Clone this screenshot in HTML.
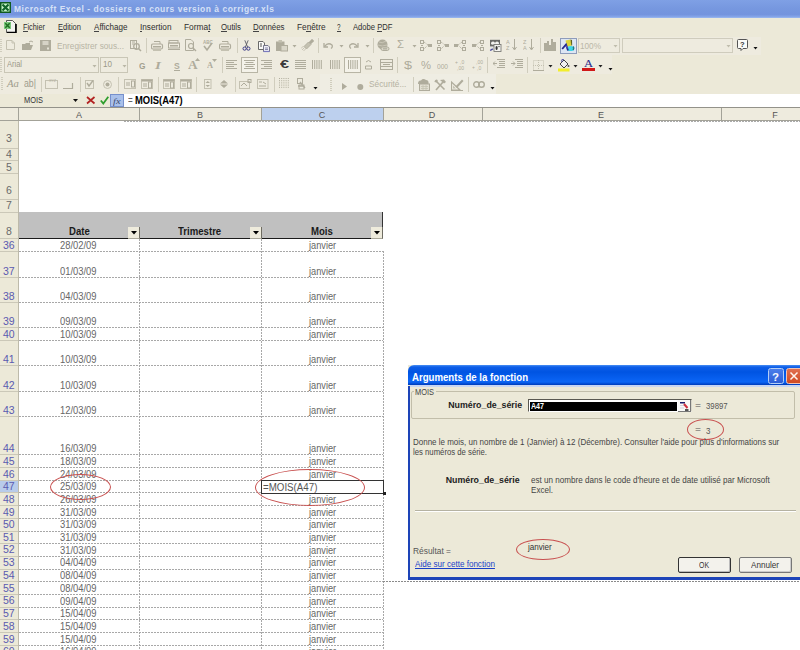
<!DOCTYPE html><html><head><meta charset="utf-8"><style>
html,body{margin:0;padding:0;width:800px;height:650px;overflow:hidden;background:#fff}
body{position:relative;font-family:"Liberation Sans",sans-serif}
.t{position:absolute;white-space:nowrap;line-height:1;transform-origin:0 0}
div,svg{position:absolute}
</style></head><body>
<div style="position:absolute;left:0px;top:0px;width:800px;height:18px;background:linear-gradient(#7FA0E5 0%,#7697DF 50%,#7494DE 80%,#88A8EA 95%,#A4BFF0 100%)"></div>
<svg style="position:absolute;left:0px;top:2px;" width="11" height="11" viewBox="0 0 11 11"><rect x="0" y="0" width="11" height="11" fill="#0F5A1E"/><rect x="1.5" y="1.5" width="8" height="8" fill="#C8F5C8"/><path d="M2.5 2.5 L8.5 8.5 M8.5 2.5 L2.5 8.5" stroke="#12652A" stroke-width="2.2"/></svg>
<div class="t" style="left:14.00px;top:4.00px;font-size:9.6px;color:#D6E1F7;font-weight:bold;transform:scaleX(0.8810);letter-spacing:0.6px;">Microsoft Excel - dossiers en cours version à corriger.xls</div>
<div style="position:absolute;left:0px;top:18px;width:800px;height:19px;background:#ECE9D8"></div>
<svg style="position:absolute;left:3px;top:20px;" width="14" height="13" viewBox="0 0 14 13"><path d="M3.5 0.5 H9.5 L12.5 3.5 V12.5 H3.5 Z" fill="#F4F4F0" stroke="#333" stroke-width="0.8"/><path d="M4 12.5 H13 V4" stroke="#000" stroke-width="1.6" fill="none"/><rect x="1" y="2" width="7" height="7" fill="#7CC87C"/><path d="M2.3 3.3 L6.7 7.7 M6.7 3.3 L2.3 7.7" stroke="#1F6E1F" stroke-width="1.5"/></svg>
<div class="t" style="left:23.00px;top:23.00px;font-size:8.5px;color:#2E2E2E;transform:scaleX(0.8627);">Fichier</div>
<div style="position:absolute;left:23.0px;top:31px;width:4.5px;height:1px;background:#444"></div>
<div class="t" style="left:58.00px;top:23.00px;font-size:8.5px;color:#2E2E2E;transform:scaleX(0.8843);">Edition</div>
<div style="position:absolute;left:58.0px;top:31px;width:5.0px;height:1px;background:#444"></div>
<div class="t" style="left:94.00px;top:23.00px;font-size:8.5px;color:#2E2E2E;transform:scaleX(0.9497);">Affichage</div>
<div style="position:absolute;left:94.0px;top:31px;width:5.4px;height:1px;background:#444"></div>
<div class="t" style="left:140.00px;top:23.00px;font-size:8.5px;color:#2E2E2E;transform:scaleX(0.9663);">Insertion</div>
<div style="position:absolute;left:140.0px;top:31px;width:2.3px;height:1px;background:#444"></div>
<div class="t" style="left:183.50px;top:23.00px;font-size:8.5px;color:#2E2E2E;transform:scaleX(0.9850);">Format</div>
<div style="position:absolute;left:207.7px;top:31px;width:2.3px;height:1px;background:#444"></div>
<div class="t" style="left:221.00px;top:23.00px;font-size:8.5px;color:#2E2E2E;transform:scaleX(0.9209);">Outils</div>
<div style="position:absolute;left:221.0px;top:31px;width:6.1px;height:1px;background:#444"></div>
<div class="t" style="left:253.00px;top:23.00px;font-size:8.5px;color:#2E2E2E;transform:scaleX(0.9253);">Données</div>
<div style="position:absolute;left:253.0px;top:31px;width:5.7px;height:1px;background:#444"></div>
<div class="t" style="left:296.50px;top:23.00px;font-size:8.5px;color:#2E2E2E;transform:scaleX(0.9733);">Fenêtre</div>
<div style="position:absolute;left:306.2px;top:31px;width:4.6px;height:1px;background:#444"></div>
<div class="t" style="left:337.00px;top:23.00px;font-size:8.5px;color:#2E2E2E;transform:scaleX(0.7419);">?</div>
<div style="position:absolute;left:337.0px;top:31px;width:3.5px;height:1px;background:#444"></div>
<div class="t" style="left:352.50px;top:23.00px;font-size:8.5px;color:#2E2E2E;transform:scaleX(0.8989);">Adobe PDF</div>
<div style="position:absolute;left:376.7px;top:31px;width:5.1px;height:1px;background:#444"></div>
<div style="position:absolute;left:0px;top:37px;width:800px;height:57px;background:#ECE9D8"></div>
<div style="position:absolute;left:0px;top:37px;width:761px;height:18px;background:#EEEBDF"></div>
<div style="position:absolute;left:0px;top:55px;width:612px;height:19px;background:#EEEBDF"></div>
<div style="position:absolute;left:0px;top:74px;width:496px;height:20px;background:#EEEBDF"></div>
<div style="position:absolute;left:0px;top:39px;width:2px;height:1px;background:#D0CDBD"></div>
<div style="position:absolute;left:0px;top:41px;width:2px;height:1px;background:#D0CDBD"></div>
<div style="position:absolute;left:0px;top:43px;width:2px;height:1px;background:#D0CDBD"></div>
<div style="position:absolute;left:0px;top:45px;width:2px;height:1px;background:#D0CDBD"></div>
<div style="position:absolute;left:0px;top:47px;width:2px;height:1px;background:#D0CDBD"></div>
<div style="position:absolute;left:0px;top:49px;width:2px;height:1px;background:#D0CDBD"></div>
<div style="position:absolute;left:0px;top:51px;width:2px;height:1px;background:#D0CDBD"></div>
<svg style="position:absolute;left:6px;top:40px;" width="10" height="11" viewBox="0 0 10 11"><path d="M0.5 0.5 H6 L8.5 3 V9.5 H0.5 Z" fill="none" stroke="#C4C1B1"/><path d="M6 0.5 V3 H8.5" fill="none" stroke="#C4C1B1"/></svg>
<svg style="position:absolute;left:22px;top:40px;" width="13" height="11" viewBox="0 0 13 11"><path d="M0 4 H3 L4 3 H8 V5 H11 L9 10 H0 Z" fill="#AFAC9C"/><path d="M7 2 Q9 0 11 2" stroke="#AFAC9C" fill="none"/></svg>
<svg style="position:absolute;left:40px;top:40px;" width="12" height="12" viewBox="0 0 12 12"><rect x="0" y="0" width="11" height="11" fill="#AFAC9C"/><rect x="2.5" y="1" width="6" height="4" fill="#D6D3C6"/><rect x="7" y="7.5" width="2" height="2" fill="#E6E3D6"/></svg>
<div class="t" style="left:56.50px;top:42.00px;font-size:8.6px;color:#B7B4A4;transform:scaleX(0.9600);">Enregistrer sous...</div>
<svg style="position:absolute;left:130px;top:40px;" width="12" height="12" viewBox="0 0 12 12"><rect x="0.5" y="0.5" width="6" height="8" fill="none" stroke="#AFAC9C"/><path d="M2 2 H5 M2 4 H5" stroke="#AFAC9C"/><circle cx="6.5" cy="6.5" r="2.8" fill="none" stroke="#AFAC9C" stroke-width="1.3"/><path d="M8.5 8.5 L11 11" stroke="#AFAC9C" stroke-width="1.5"/></svg>
<div style="position:absolute;left:145.5px;top:38px;width:1px;height:15px;background:#D0CDBD"></div>
<svg style="position:absolute;left:150.5px;top:40.5px;" width="13" height="11" viewBox="0 0 13 11"><path d="M3 0.5 H9 V3" fill="none" stroke="#AFAC9C"/><rect x="0.5" y="3" width="11" height="5" rx="1.5" fill="none" stroke="#AFAC9C" stroke-width="1.2"/><rect x="2" y="5" width="8" height="1.5" fill="#AFAC9C"/><rect x="2" y="8" width="8" height="2" fill="#C4C1B1"/></svg>
<svg style="position:absolute;left:168px;top:40px;" width="13" height="11" viewBox="0 0 13 11"><rect x="1" y="0.5" width="9" height="2.5" fill="none" stroke="#AFAC9C"/><rect x="0.5" y="3" width="11" height="5" fill="none" stroke="#AFAC9C"/><rect x="2" y="5" width="8" height="1.5" fill="#AFAC9C"/><path d="M0 9.5 H12" stroke="#AFAC9C"/></svg>
<svg style="position:absolute;left:185px;top:39px;" width="13" height="13" viewBox="0 0 13 13"><path d="M0.5 0.5 H6 L8.5 3 V11.5 H0.5 Z" fill="none" stroke="#AFAC9C"/><circle cx="6" cy="7" r="2.5" fill="none" stroke="#AFAC9C" stroke-width="1.2"/><path d="M8 9 L11 12" stroke="#AFAC9C" stroke-width="1.4"/></svg>
<svg style="position:absolute;left:202px;top:40px;" width="12" height="12" viewBox="0 0 12 12"><text x="1" y="4" font-size="4.5" font-family="Liberation Sans" font-weight="bold" fill="#AFAC9C">ABC</text><path d="M2 6 L5 10 L10 3" stroke="#AFAC9C" stroke-width="1.6" fill="none"/></svg>
<svg style="position:absolute;left:219px;top:40.5px;" width="13" height="11" viewBox="0 0 13 11"><path d="M3 0.5 H9 V3" fill="none" stroke="#AFAC9C"/><rect x="0.5" y="3" width="11" height="5" rx="1.5" fill="none" stroke="#AFAC9C" stroke-width="1.2"/><rect x="2" y="5" width="8" height="1.5" fill="#AFAC9C"/><rect x="2" y="8" width="8" height="2" fill="#C4C1B1"/></svg>
<div style="position:absolute;left:236.5px;top:38px;width:1px;height:15px;background:#D0CDBD"></div>
<svg style="position:absolute;left:242px;top:40px;" width="10" height="12" viewBox="0 0 10 12"><path d="M2.8 0.3 L5.6 7 M6.2 0.3 L3.4 7" stroke="#5A5A64" stroke-width="0.9"/><circle cx="2.6" cy="8.6" r="1.6" fill="none" stroke="#3A3A86" stroke-width="1"/><circle cx="6.4" cy="8.6" r="1.6" fill="none" stroke="#3A3A86" stroke-width="1"/></svg>
<svg style="position:absolute;left:258px;top:40.5px;" width="14" height="12" viewBox="0 0 14 12"><path d="M0.5 0.5 H5 L6.5 2 V8.5 H0.5 Z" fill="#FAFAF8" stroke="#5A5A5A" stroke-width="0.9"/><path d="M2 3 H4 M2 5 H4" stroke="#555"/><path d="M5.5 4.5 H10 L11.5 6 V10.5 H5.5 Z" fill="#EEEEF6" stroke="#6A6A80" stroke-width="0.9"/><path d="M7 7 H10 M7 8.5 H10" stroke="#8A8AAA"/><path d="M5.5 10.5 H11.5" stroke="#7A7AC0" stroke-width="1.2"/></svg>
<svg style="position:absolute;left:276px;top:40px;" width="13" height="12" viewBox="0 0 13 12"><rect x="0" y="1.5" width="8.5" height="9.5" fill="#AFAC9C"/><rect x="2.5" y="0" width="3.5" height="2.5" fill="#C4C1B1"/><rect x="5" y="5.5" width="6.5" height="5.5" fill="#D9D6C8" stroke="#AFAC9C"/></svg>
<svg style="position:absolute;left:292px;top:45px;" width="5" height="3" viewBox="0 0 5 3"><path d="M0.5 0 H4.5 L2.5 2.5 Z" fill="#AFAC9C"/></svg>
<svg style="position:absolute;left:301px;top:39px;" width="13" height="13" viewBox="0 0 13 13"><path d="M8.5 3.5 L11 1 L12 2 L9.5 4.5" stroke="#AFAC9C" stroke-width="1.6"/><path d="M3 7.5 L7.5 3 L10 5.5 L5.5 10 Z" fill="#C4C1B1" stroke="#AFAC9C" stroke-width="0.9"/><path d="M3.5 8.5 L1 11 M5 9.5 L2.5 12 M2.5 7 L0 9.5" stroke="#C4C1B1" stroke-width="0.9"/></svg>
<div style="position:absolute;left:317.5px;top:38px;width:1px;height:15px;background:#D0CDBD"></div>
<svg style="position:absolute;left:323px;top:42px;" width="11" height="7" viewBox="0 0 11 7"><path d="M1 1 V5 H5" fill="none" stroke="#AFAC9C" stroke-width="1.3"/><path d="M1.5 4.5 Q5 0 9 3 Q10 5 8 6.5" fill="none" stroke="#AFAC9C" stroke-width="1.3"/></svg>
<svg style="position:absolute;left:339px;top:45px;" width="5" height="3" viewBox="0 0 5 3"><path d="M0.5 0 H4.5 L2.5 2.5 Z" fill="#AFAC9C"/></svg>
<svg style="position:absolute;left:349px;top:42px;" width="11" height="7" viewBox="0 0 11 7"><path d="M9 1 V5 H5" fill="none" stroke="#AFAC9C" stroke-width="1.3"/><path d="M8.5 4.5 Q5 0 1 3 Q0 5 2 6.5" fill="none" stroke="#AFAC9C" stroke-width="1.3"/></svg>
<svg style="position:absolute;left:364.5px;top:45px;" width="5" height="3" viewBox="0 0 5 3"><path d="M0.5 0 H4.5 L2.5 2.5 Z" fill="#AFAC9C"/></svg>
<div style="position:absolute;left:372.5px;top:38px;width:1px;height:15px;background:#D0CDBD"></div>
<svg style="position:absolute;left:377px;top:39px;" width="14" height="13" viewBox="0 0 14 13"><circle cx="5.5" cy="5.5" r="5" fill="#AFAC9C"/><path d="M2 3 Q5 5 9 2 M1 6 Q5 8 10 6" stroke="#D0CDBE" fill="none" stroke-width="0.8"/><rect x="4" y="8" width="8" height="3.5" rx="1.7" fill="#D9D6C8" stroke="#AFAC9C"/><path d="M6 9.8 H10" stroke="#AFAC9C" stroke-width="1.2"/></svg>
<div class="t" style="left:397.00px;top:40.00px;font-size:10px;color:#AFAC9C;transform:scaleX(1.1290);">Σ</div>
<svg style="position:absolute;left:411.5px;top:45px;" width="5" height="3" viewBox="0 0 5 3"><path d="M0.5 0 H4.5 L2.5 2.5 Z" fill="#AFAC9C"/></svg>
<svg style="position:absolute;left:420px;top:40px;" width="13" height="12" viewBox="0 0 13 12"><rect x="0.5" y="0.5" width="3" height="3" fill="none" stroke="#AFAC9C"/><rect x="0.5" y="7.5" width="3" height="3" fill="none" stroke="#AFAC9C"/><path d="M1 5.5 H3" stroke="#AFAC9C"/><path d="M4 2 L8 5 L4 9" fill="none" stroke="#AFAC9C" stroke-dasharray="1 1"/><rect x="8" y="4" width="4" height="3" fill="#AFAC9C"/></svg>
<svg style="position:absolute;left:437px;top:40px;" width="13" height="12" viewBox="0 0 13 12"><rect x="0.5" y="0.5" width="3" height="3" fill="none" stroke="#AFAC9C"/><rect x="0.5" y="7.5" width="3" height="3" fill="none" stroke="#AFAC9C"/><path d="M1 5.5 H3" stroke="#AFAC9C"/><path d="M4 2 L8 5 L4 9" fill="none" stroke="#AFAC9C" stroke-dasharray="1 1"/><rect x="8" y="4" width="4" height="3" fill="#AFAC9C"/></svg>
<svg style="position:absolute;left:454px;top:40px;" width="13" height="12" viewBox="0 0 13 12"><rect x="8.5" y="0.5" width="3" height="3" fill="none" stroke="#AFAC9C"/><rect x="8.5" y="7.5" width="3" height="3" fill="none" stroke="#AFAC9C"/><path d="M9 5.5 H11" stroke="#AFAC9C"/><path d="M8 2 L4 5 L8 9" fill="none" stroke="#AFAC9C" stroke-dasharray="1 1"/><rect x="0" y="4" width="4" height="3" fill="#AFAC9C"/></svg>
<svg style="position:absolute;left:471.5px;top:40px;" width="13" height="12" viewBox="0 0 13 12"><rect x="8.5" y="0.5" width="3" height="3" fill="none" stroke="#AFAC9C"/><rect x="8.5" y="7.5" width="3" height="3" fill="none" stroke="#AFAC9C"/><path d="M9 5.5 H11" stroke="#AFAC9C"/><path d="M8 2 L4 5 L8 9" fill="none" stroke="#AFAC9C" stroke-dasharray="1 1"/><rect x="0" y="4" width="4" height="3" fill="#AFAC9C"/></svg>
<svg style="position:absolute;left:488.5px;top:39px;" width="13" height="13" viewBox="0 0 13 13"><rect x="1" y="0.8" width="10" height="7" fill="#6A6A66"/><ellipse cx="4" cy="4.2" rx="2" ry="1.6" fill="#F2F2EE"/><ellipse cx="8" cy="4.2" rx="2" ry="1.6" fill="#F2F2EE"/><rect x="1" y="7.5" width="4" height="4.5" fill="#E8E8E4"/><rect x="5" y="5.5" width="7" height="7" fill="#F4F4F0" stroke="#7A7A76" stroke-width="0.9"/><ellipse cx="7.6" cy="9" rx="1.1" ry="2" fill="#333"/><circle cx="10" cy="7.6" r="0.7" fill="#333"/><path d="M1.2 11.5 L3.8 9.8" stroke="#4A4A9A" stroke-width="1.4"/></svg>
<svg style="position:absolute;left:506px;top:39px;" width="13" height="13" viewBox="0 0 13 13"><text x="0" y="5" font-size="5.5" font-family="Liberation Sans" fill="#AFAC9C">A</text><text x="0" y="11" font-size="5.5" font-family="Liberation Sans" fill="#AFAC9C">Z</text><path d="M8.5 0 V10 M6.5 8 L8.5 11 L10.5 8" stroke="#AFAC9C" fill="none"/></svg>
<svg style="position:absolute;left:523px;top:39px;" width="13" height="13" viewBox="0 0 13 13"><text x="0" y="5" font-size="5.5" font-family="Liberation Sans" fill="#AFAC9C">Z</text><text x="0" y="11" font-size="5.5" font-family="Liberation Sans" fill="#AFAC9C">A</text><path d="M8.5 0 V10 M6.5 8 L8.5 11 L10.5 8" stroke="#AFAC9C" fill="none"/></svg>
<div style="position:absolute;left:540px;top:38px;width:1px;height:15px;background:#D0CDBD"></div>
<svg style="position:absolute;left:544px;top:39px;" width="14" height="13" viewBox="0 0 14 13"><path d="M0 12 V4 H3 V2 H5 V6 H7 V0 H9 V3 H12 V12 Z" fill="#AFAC9C"/></svg>
<div style="position:absolute;left:560px;top:37.5px;width:17px;height:16px;background:#DDE6F4;border:1px solid #8E9CBA;box-sizing:border-box"></div>
<svg style="position:absolute;left:561px;top:38px;" width="16" height="15" viewBox="0 0 16 15"><path d="M4.5 2.5 L9.5 1.5 L10.5 7.5 L6 9 Z" fill="#DCD43A"/><path d="M9.5 1.5 L11 2 L11.2 7.2 L10.3 7.6 Z" fill="#5E6420"/><ellipse cx="9.5" cy="10.5" rx="3.6" ry="2.6" fill="#3ED6E6"/><path d="M12 8.5 Q13.5 10 12 12" stroke="#207C80" stroke-width="1.3" fill="none"/><path d="M1.2 11 L5 6.5 L7 12.5" stroke="#22288A" stroke-width="1.8" fill="none"/><path d="M4 8 L6 7.5 L7 11" fill="#5A50C8"/></svg>
<div style="position:absolute;left:578px;top:38px;width:42px;height:14.5px;border:1px solid #CFCCBD;box-sizing:border-box"></div>
<div class="t" style="left:580.00px;top:42.00px;font-size:9px;color:#BAB7A7;transform:scaleX(0.9115);">100%</div>
<svg style="position:absolute;left:613px;top:45px;" width="5" height="3" viewBox="0 0 5 3"><path d="M0.5 0 H4.5 L2.5 2.5 Z" fill="#C0BDAD"/></svg>
<div style="position:absolute;left:622px;top:38px;width:111px;height:14.5px;border:1px solid #CFCCBD;box-sizing:border-box"></div>
<svg style="position:absolute;left:726px;top:45px;" width="5" height="3" viewBox="0 0 5 3"><path d="M0.5 0 H4.5 L2.5 2.5 Z" fill="#C0BDAD"/></svg>
<svg style="position:absolute;left:737px;top:39px;" width="12" height="13" viewBox="0 0 12 13"><path d="M1.5 0.5 H9.5 Q10.5 0.5 10.5 1.5 V8.5 Q10.5 9.5 9.5 9.5 H6 L4 11.5 V9.5 H1.5 Q0.5 9.5 0.5 8.5 V1.5 Q0.5 0.5 1.5 0.5 Z" fill="#FAFAF6" stroke="#555"/><text x="3" y="7.5" font-size="7.5" font-weight="bold" font-family="Liberation Sans" fill="#333">?</text></svg>
<svg style="position:absolute;left:753px;top:47px;" width="5" height="3" viewBox="0 0 5 3"><path d="M0.5 0 H4.5 L2.5 2.5 Z" fill="#111"/></svg>
<div style="position:absolute;left:0px;top:57px;width:2px;height:1px;background:#D0CDBD"></div>
<div style="position:absolute;left:0px;top:59px;width:2px;height:1px;background:#D0CDBD"></div>
<div style="position:absolute;left:0px;top:61px;width:2px;height:1px;background:#D0CDBD"></div>
<div style="position:absolute;left:0px;top:63px;width:2px;height:1px;background:#D0CDBD"></div>
<div style="position:absolute;left:0px;top:65px;width:2px;height:1px;background:#D0CDBD"></div>
<div style="position:absolute;left:0px;top:67px;width:2px;height:1px;background:#D0CDBD"></div>
<div style="position:absolute;left:0px;top:69px;width:2px;height:1px;background:#D0CDBD"></div>
<div style="position:absolute;left:0px;top:71px;width:2px;height:1px;background:#D0CDBD"></div>
<div style="position:absolute;left:4px;top:57px;width:95px;height:15.5px;border:1px solid #C9C6B6;box-sizing:border-box"></div>
<div class="t" style="left:6.50px;top:60.00px;font-size:9px;color:#9C9989;transform:scaleX(0.8333);">Arial</div>
<svg style="position:absolute;left:91.5px;top:64.5px;" width="5" height="3" viewBox="0 0 5 3"><path d="M0.5 0 H4.5 L2.5 2.5 Z" fill="#B9B6A6"/></svg>
<div style="position:absolute;left:100px;top:57px;width:28px;height:15.5px;border:1px solid #C9C6B6;box-sizing:border-box"></div>
<div class="t" style="left:102.50px;top:60.00px;font-size:9px;color:#9C9989;transform:scaleX(0.9009);">10</div>
<svg style="position:absolute;left:121.5px;top:64.5px;" width="5" height="3" viewBox="0 0 5 3"><path d="M0.5 0 H4.5 L2.5 2.5 Z" fill="#B9B6A6"/></svg>
<div class="t" style="left:139.00px;top:62.00px;font-size:9px;color:#A29F8F;font-weight:bold;transform:scaleX(0.9259);">G</div>
<div class="t" style="left:155.15px;top:62.00px;font-size:9.5px;color:#AFAC9C;font-weight:bold;transform:scaleX(1.5912);font-family:'Liberation Serif',serif;font-style:italic;">I</div>
<div class="t" style="left:173.70px;top:62.00px;font-size:9px;color:#AFAC9C;font-weight:bold;transform:scaleX(0.9524);">S</div>
<div style="position:absolute;left:173.5px;top:70px;width:6.5px;height:1px;background:#AFAC9C"></div>
<div class="t" style="left:187.60px;top:59.00px;font-size:12px;color:#AFAC9C;font-weight:bold;transform:scaleX(1.0995);font-family:'Liberation Serif',serif;">A</div>
<svg style="position:absolute;left:195px;top:58px;" width="5" height="3" viewBox="0 0 5 3"><path d="M0 3 L2.5 0 L5 3 Z" fill="#AFAC9C"/></svg>
<div class="t" style="left:207.00px;top:62.00px;font-size:8px;color:#AFAC9C;font-weight:bold;transform:scaleX(1.0417);font-family:'Liberation Serif',serif;">A</div>
<svg style="position:absolute;left:212px;top:59px;" width="5" height="3" viewBox="0 0 5 3"><path d="M0 0 H5 L2.5 3 Z" fill="#AFAC9C"/></svg>
<div style="position:absolute;left:221.5px;top:57px;width:1px;height:16px;background:#D0CDBD"></div>
<svg style="position:absolute;left:226px;top:60px;" width="12" height="10" viewBox="0 0 12 10"><rect x="0" y="0" width="11" height="1" fill="#AFAC9C"/><rect x="0" y="2" width="8" height="1" fill="#AFAC9C"/><rect x="0" y="4" width="11" height="1" fill="#AFAC9C"/><rect x="0" y="6" width="8" height="1" fill="#AFAC9C"/><rect x="0" y="8" width="11" height="1" fill="#AFAC9C"/></svg>
<div style="position:absolute;left:241px;top:57px;width:17px;height:15.5px;border:1px solid #B8B5A5;background:#F4F2E9;box-sizing:border-box"></div>
<svg style="position:absolute;left:244px;top:60px;" width="12" height="10" viewBox="0 0 12 10"><rect x="0" y="0" width="11" height="1" fill="#AFAC9C"/><rect x="1.5" y="2" width="8" height="1" fill="#AFAC9C"/><rect x="0" y="4" width="11" height="1" fill="#AFAC9C"/><rect x="1.5" y="6" width="8" height="1" fill="#AFAC9C"/><rect x="0" y="8" width="11" height="1" fill="#AFAC9C"/></svg>
<svg style="position:absolute;left:261px;top:60px;" width="12" height="10" viewBox="0 0 12 10"><rect x="0" y="0" width="11" height="1" fill="#AFAC9C"/><rect x="3" y="2" width="8" height="1" fill="#AFAC9C"/><rect x="0" y="4" width="11" height="1" fill="#AFAC9C"/><rect x="3" y="6" width="8" height="1" fill="#AFAC9C"/><rect x="0" y="8" width="11" height="1" fill="#AFAC9C"/></svg>
<div class="t" style="left:279.50px;top:60.00px;font-size:10px;color:#3A3A3A;font-weight:bold;transform:scaleX(1.6216);">€</div>
<svg style="position:absolute;left:295px;top:60px;" width="12" height="10" viewBox="0 0 12 10"><rect x="0" y="0" width="11" height="1" fill="#AFAC9C"/><rect x="0" y="2" width="11" height="1" fill="#AFAC9C"/><rect x="0" y="4" width="11" height="1" fill="#AFAC9C"/><rect x="0" y="6" width="11" height="1" fill="#AFAC9C"/><rect x="0" y="8" width="11" height="1" fill="#AFAC9C"/></svg>
<svg style="position:absolute;left:312px;top:60px;" width="12" height="10" viewBox="0 0 12 10"><rect x="0.0" y="0" width="1" height="9" fill="#AFAC9C"/><rect x="2.2" y="0" width="1" height="9" fill="#AFAC9C"/><rect x="4.4" y="0" width="1" height="9" fill="#AFAC9C"/><rect x="6.6" y="0" width="1" height="9" fill="#AFAC9C"/><rect x="8.8" y="0" width="1" height="9" fill="#AFAC9C"/></svg>
<svg style="position:absolute;left:330px;top:60px;" width="12" height="10" viewBox="0 0 12 10"><rect x="0.0" y="0" width="1" height="9" fill="#AFAC9C"/><rect x="2.2" y="0" width="1" height="9" fill="#AFAC9C"/><rect x="4.4" y="0" width="1" height="9" fill="#AFAC9C"/><rect x="6.6" y="0" width="1" height="9" fill="#AFAC9C"/><rect x="8.8" y="0" width="1" height="9" fill="#AFAC9C"/></svg>
<div style="position:absolute;left:344px;top:57px;width:17px;height:15.5px;border:1px solid #B8B5A5;background:#F4F2E9;box-sizing:border-box"></div>
<svg style="position:absolute;left:347.5px;top:60px;" width="12" height="10" viewBox="0 0 12 10"><rect x="0.0" y="0" width="1" height="9" fill="#AFAC9C"/><rect x="2.2" y="0" width="1" height="9" fill="#AFAC9C"/><rect x="4.4" y="0" width="1" height="9" fill="#AFAC9C"/><rect x="6.6" y="0" width="1" height="9" fill="#AFAC9C"/><rect x="8.8" y="0" width="1" height="9" fill="#AFAC9C"/></svg>
<svg style="position:absolute;left:365px;top:59px;" width="8" height="11" viewBox="0 0 8 11"><path d="M1 3 Q3.5 0 6 3 M0.5 7 H6.5 V10 H0.5 Z" fill="none" stroke="#AFAC9C"/></svg>
<svg style="position:absolute;left:380px;top:59px;" width="14" height="12" viewBox="0 0 14 12"><rect x="0.5" y="0.5" width="12" height="10" fill="none" stroke="#AFAC9C"/><path d="M0 3.5 H13 M0 7.5 H13 M3 5.5 H10" stroke="#AFAC9C"/></svg>
<div style="position:absolute;left:397px;top:57px;width:1px;height:16px;background:#D0CDBD"></div>
<div class="t" style="left:404.00px;top:61.00px;font-size:10px;color:#AFAC9C;transform:scaleX(1.4414);">$</div>
<div class="t" style="left:421.00px;top:61.00px;font-size:10px;color:#AFAC9C;transform:scaleX(1.1236);">%</div>
<div class="t" style="left:437.00px;top:63.00px;font-size:8px;color:#AFAC9C;transform:scaleX(0.8234);">000</div>
<svg style="position:absolute;left:454.5px;top:59px;" width="12" height="12" viewBox="0 0 12 12"><text x="0" y="4.5" font-size="5" font-family="Liberation Sans" fill="#AFAC9C">+</text><text x="5" y="5" font-size="5" font-family="Liberation Sans" fill="#AFAC9C">,0</text><text x="2" y="10.5" font-size="5" font-family="Liberation Sans" fill="#AFAC9C">,00</text></svg>
<svg style="position:absolute;left:471.5px;top:59px;" width="12" height="12" viewBox="0 0 12 12"><text x="4" y="5" font-size="5" font-family="Liberation Sans" fill="#AFAC9C">,00</text><text x="0" y="10" font-size="5" font-family="Liberation Sans" fill="#AFAC9C">+</text><text x="5" y="10.5" font-size="5" font-family="Liberation Sans" fill="#AFAC9C">,0</text></svg>
<div style="position:absolute;left:487px;top:57px;width:1px;height:16px;background:#D0CDBD"></div>
<svg style="position:absolute;left:493px;top:59px;" width="13" height="12" viewBox="0 0 13 12"><path d="M4 0.5 H12 M6 2.5 H12 M6 4.5 H12 M6 6.5 H12 M4 8.5 H12 M0 4.5 H4 M2 2.5 L0 4.5 L2 6.5" stroke="#AFAC9C" fill="none"/></svg>
<svg style="position:absolute;left:510.5px;top:59px;" width="12" height="12" viewBox="0 0 12 12"><path d="M4 0.5 H12 M6 2.5 H12 M6 4.5 H12 M6 6.5 H12 M4 8.5 H12 M0 4.5 H4 M2 2.5 L4 4.5 L2 6.5" stroke="#AFAC9C" fill="none"/></svg>
<div style="position:absolute;left:526.5px;top:57px;width:1px;height:16px;background:#D0CDBD"></div>
<svg style="position:absolute;left:532.5px;top:59.5px;" width="12" height="12" viewBox="0 0 12 12"><path d="M0.5 0.5 H10.5 V10.5 H0.5 Z M5.5 0 V11 M0 5.5 H11" stroke="#C4C1B1" fill="none" stroke-dasharray="1 1"/><path d="M0 10.5 H11" stroke="#AFAC9C"/></svg>
<svg style="position:absolute;left:548px;top:64.5px;" width="5" height="3" viewBox="0 0 5 3"><path d="M0.5 0 H4.5 L2.5 2.5 Z" fill="#222"/></svg>
<svg style="position:absolute;left:557.5px;top:58.5px;" width="12" height="14" viewBox="0 0 12 14"><path d="M2 5 L6 1 L10 5 L6 9 Z" fill="#F0F0F0" stroke="#444"/><path d="M6 1 Q3 -1 4 3" stroke="#3C3CA0" fill="none"/><circle cx="10.5" cy="7" r="1" fill="#555"/><rect x="0" y="9.5" width="11.5" height="3" fill="#F2EE2C"/></svg>
<svg style="position:absolute;left:573px;top:64.5px;" width="5" height="3" viewBox="0 0 5 3"><path d="M0.5 0 H4.5 L2.5 2.5 Z" fill="#222"/></svg>
<div class="t" style="left:583.50px;top:60.00px;font-size:9.5px;color:#2A2A8A;transform:scaleX(1.3158);font-family:'Liberation Serif',serif;">A</div>
<div style="position:absolute;left:582px;top:67.8px;width:12.5px;height:3px;background:#D01818"></div>
<svg style="position:absolute;left:598px;top:64.5px;" width="5" height="3" viewBox="0 0 5 3"><path d="M0.5 0 H4.5 L2.5 2.5 Z" fill="#222"/></svg>
<svg style="position:absolute;left:607.5px;top:67.5px;" width="5" height="3" viewBox="0 0 5 3"><path d="M0.5 0 H4.5 L2.5 2.5 Z" fill="#111"/></svg>
<div style="position:absolute;left:1px;top:77px;width:2px;height:1px;background:#D0CDBD"></div>
<div style="position:absolute;left:1px;top:79px;width:2px;height:1px;background:#D0CDBD"></div>
<div style="position:absolute;left:1px;top:81px;width:2px;height:1px;background:#D0CDBD"></div>
<div style="position:absolute;left:1px;top:83px;width:2px;height:1px;background:#D0CDBD"></div>
<div style="position:absolute;left:1px;top:85px;width:2px;height:1px;background:#D0CDBD"></div>
<div style="position:absolute;left:1px;top:87px;width:2px;height:1px;background:#D0CDBD"></div>
<div style="position:absolute;left:1px;top:89px;width:2px;height:1px;background:#D0CDBD"></div>
<div class="t" style="left:7.09px;top:79.00px;font-size:10px;color:#A09D8D;transform:scaleX(1.0730);font-family:'Liberation Serif',serif;font-style:italic;">Aa</div>
<div class="t" style="left:24.00px;top:79.00px;font-size:10px;color:#A09D8D;transform:scaleX(0.8759);">ab|</div>
<div style="position:absolute;left:40.5px;top:77px;width:1px;height:15px;background:#D0CDBD"></div>
<svg style="position:absolute;left:45px;top:78px;" width="14" height="12" viewBox="0 0 14 12"><rect x="0.5" y="2.5" width="12" height="8" fill="none" stroke="#C4C1B1"/><text x="4" y="3.5" font-size="3.5" font-family="Liberation Sans" fill="#AFAC9C">XYZ</text></svg>
<svg style="position:absolute;left:63px;top:83px;" width="11" height="7" viewBox="0 0 11 7"><path d="M0 5.5 H9.5 V0" stroke="#AFAC9C" fill="none" stroke-width="1.2"/></svg>
<div style="position:absolute;left:79.5px;top:77px;width:1px;height:15px;background:#D0CDBD"></div>
<svg style="position:absolute;left:85px;top:80px;" width="10" height="10" viewBox="0 0 10 10"><rect x="0.5" y="0.5" width="8" height="8" fill="none" stroke="#C4C1B1"/><path d="M2 3 L4 6 L8 0.5" stroke="#AFAC9C" fill="none" stroke-width="1.4"/></svg>
<svg style="position:absolute;left:103px;top:80px;" width="10" height="10" viewBox="0 0 10 10"><circle cx="4.5" cy="4.5" r="4" fill="none" stroke="#C4C1B1"/><circle cx="4.5" cy="4.5" r="2" fill="#AFAC9C"/></svg>
<div style="position:absolute;left:118px;top:77px;width:1px;height:15px;background:#D0CDBD"></div>
<svg style="position:absolute;left:123.5px;top:79px;" width="13" height="11" viewBox="0 0 13 11"><rect x="0.5" y="0.5" width="11" height="9" fill="none" stroke="#C4C1B1"/><path d="M2 4 H6 M2 6 H6" stroke="#AFAC9C"/><rect x="7.5" y="2" width="3" height="6" fill="none" stroke="#AFAC9C"/></svg>
<svg style="position:absolute;left:140.5px;top:79px;" width="13" height="11" viewBox="0 0 13 11"><rect x="0.5" y="0.5" width="11" height="9" fill="none" stroke="#C4C1B1"/><rect x="0.5" y="0.5" width="11" height="2" fill="#AFAC9C"/><path d="M2 5 H6 M2 7 H6" stroke="#AFAC9C"/><rect x="7.5" y="3" width="3" height="6" fill="none" stroke="#AFAC9C"/></svg>
<div style="position:absolute;left:157.5px;top:77px;width:1px;height:15px;background:#D0CDBD"></div>
<svg style="position:absolute;left:162.5px;top:79px;" width="13" height="11" viewBox="0 0 13 11"><rect x="0.5" y="0.5" width="11" height="9" fill="none" stroke="#C4C1B1"/><rect x="0.5" y="0.5" width="11" height="2" fill="#AFAC9C"/><path d="M2 5 H6 M2 7 H6" stroke="#AFAC9C"/><rect x="7.5" y="3" width="3" height="6" fill="none" stroke="#AFAC9C"/></svg>
<svg style="position:absolute;left:179.5px;top:79px;" width="13" height="11" viewBox="0 0 13 11"><rect x="0.5" y="0.5" width="11" height="9" fill="none" stroke="#C4C1B1"/><rect x="0.5" y="0.5" width="11" height="2" fill="#AFAC9C"/><path d="M2 5 H6 M2 7 H6" stroke="#AFAC9C"/><rect x="7.5" y="3" width="3" height="6" fill="none" stroke="#AFAC9C"/></svg>
<div style="position:absolute;left:195.7px;top:77px;width:1px;height:15px;background:#D0CDBD"></div>
<svg style="position:absolute;left:203.5px;top:79px;" width="8" height="11" viewBox="0 0 8 11"><rect x="0.5" y="0.5" width="6.5" height="9" fill="none" stroke="#C4C1B1"/><path d="M1.5 4 L3.75 2 L6 4 Z M1.5 6 L3.75 8 L6 6 Z" fill="#AFAC9C"/></svg>
<svg style="position:absolute;left:220px;top:80px;" width="9" height="9" viewBox="0 0 9 9"><path d="M0 3.5 L4 0 L8 3.5 Z M0 4.5 L4 8 L8 4.5 Z" fill="#AFAC9C"/></svg>
<div style="position:absolute;left:234.7px;top:77px;width:1px;height:15px;background:#D0CDBD"></div>
<svg style="position:absolute;left:238.5px;top:79px;" width="14" height="11" viewBox="0 0 14 11"><rect x="0.5" y="2.5" width="10" height="7" fill="none" stroke="#C4C1B1"/><path d="M2 7 L5 4 L8 7" stroke="#AFAC9C" fill="none"/><rect x="9" y="0.5" width="3" height="3" fill="none" stroke="#AFAC9C"/></svg>
<svg style="position:absolute;left:256.5px;top:79px;" width="12" height="11" viewBox="0 0 12 11"><rect x="0.5" y="0.5" width="10.5" height="9" fill="none" stroke="#C4C1B1"/><path d="M2 3 H5 M2 7 H9 M6 3 L9 5" stroke="#AFAC9C"/></svg>
<div style="position:absolute;left:274px;top:77px;width:1px;height:15px;background:#D0CDBD"></div>
<svg style="position:absolute;left:279px;top:78px;" width="12" height="12" viewBox="0 0 12 12"><rect x="0.0" y="0.0" width="1" height="1" fill="#AFAC9C"/><rect x="0.0" y="2.2" width="1" height="1" fill="#AFAC9C"/><rect x="0.0" y="4.4" width="1" height="1" fill="#AFAC9C"/><rect x="0.0" y="6.6" width="1" height="1" fill="#AFAC9C"/><rect x="0.0" y="8.8" width="1" height="1" fill="#AFAC9C"/><rect x="2.2" y="0.0" width="1" height="1" fill="#AFAC9C"/><rect x="2.2" y="2.2" width="1" height="1" fill="#AFAC9C"/><rect x="2.2" y="4.4" width="1" height="1" fill="#AFAC9C"/><rect x="2.2" y="6.6" width="1" height="1" fill="#AFAC9C"/><rect x="2.2" y="8.8" width="1" height="1" fill="#AFAC9C"/><rect x="4.4" y="0.0" width="1" height="1" fill="#AFAC9C"/><rect x="4.4" y="2.2" width="1" height="1" fill="#AFAC9C"/><rect x="4.4" y="4.4" width="1" height="1" fill="#AFAC9C"/><rect x="4.4" y="6.6" width="1" height="1" fill="#AFAC9C"/><rect x="4.4" y="8.8" width="1" height="1" fill="#AFAC9C"/><rect x="6.6" y="0.0" width="1" height="1" fill="#AFAC9C"/><rect x="6.6" y="2.2" width="1" height="1" fill="#AFAC9C"/><rect x="6.6" y="4.4" width="1" height="1" fill="#AFAC9C"/><rect x="6.6" y="6.6" width="1" height="1" fill="#AFAC9C"/><rect x="6.6" y="8.8" width="1" height="1" fill="#AFAC9C"/><rect x="8.8" y="0.0" width="1" height="1" fill="#AFAC9C"/><rect x="8.8" y="2.2" width="1" height="1" fill="#AFAC9C"/><rect x="8.8" y="4.4" width="1" height="1" fill="#AFAC9C"/><rect x="8.8" y="6.6" width="1" height="1" fill="#AFAC9C"/><rect x="8.8" y="8.8" width="1" height="1" fill="#AFAC9C"/></svg>
<svg style="position:absolute;left:297px;top:78px;" width="10" height="13" viewBox="0 0 10 13"><rect x="0.5" y="0.5" width="5" height="5" fill="none" stroke="#AFAC9C"/><path d="M3 4 L8 10 M1 8 H6" stroke="#AFAC9C" stroke-width="1.3"/><rect x="2" y="7" width="5" height="4" fill="none" stroke="#AFAC9C"/></svg>
<svg style="position:absolute;left:312.5px;top:87.3px;" width="5" height="3" viewBox="0 0 5 3"><path d="M0.5 0 H4.5 L2.5 2.5 Z" fill="#111"/></svg>
<div style="position:absolute;left:320px;top:74px;width:176px;height:20px;background:#EFEDE3"></div>
<div style="position:absolute;left:329.5px;top:78px;width:2px;height:1px;background:#D0CDBD"></div>
<div style="position:absolute;left:329.5px;top:80px;width:2px;height:1px;background:#D0CDBD"></div>
<div style="position:absolute;left:329.5px;top:82px;width:2px;height:1px;background:#D0CDBD"></div>
<div style="position:absolute;left:329.5px;top:84px;width:2px;height:1px;background:#D0CDBD"></div>
<div style="position:absolute;left:329.5px;top:86px;width:2px;height:1px;background:#D0CDBD"></div>
<div style="position:absolute;left:329.5px;top:88px;width:2px;height:1px;background:#D0CDBD"></div>
<div style="position:absolute;left:329.5px;top:90px;width:2px;height:1px;background:#D0CDBD"></div>
<svg style="position:absolute;left:341.5px;top:83px;" width="6" height="7" viewBox="0 0 6 7"><path d="M0 0 L5 3.5 L0 7 Z" fill="#AFAC9C"/></svg>
<svg style="position:absolute;left:357px;top:84px;" width="7" height="6" viewBox="0 0 7 6"><circle cx="3.3" cy="3" r="3" fill="#AFAC9C"/></svg>
<div class="t" style="left:368.60px;top:80.00px;font-size:8.6px;color:#B5B2A2;transform:scaleX(0.9638);">Sécurité...</div>
<div style="position:absolute;left:412.7px;top:77px;width:1px;height:15px;background:#D0CDBD"></div>
<svg style="position:absolute;left:417px;top:77.5px;" width="14" height="14" viewBox="0 0 14 14"><path d="M1 6 Q1 2 4 2.5 Q6 0 9 2 Q12 2 11.5 6 Z" fill="#AFAC9C"/><rect x="2.5" y="6" width="10" height="6.5" fill="#E2DFD2" stroke="#AFAC9C"/><path d="M4 8.5 H11 M4 10.5 H11 M6 7 V12 M9 7 V12" stroke="#C4C1B1" stroke-width="0.8"/></svg>
<svg style="position:absolute;left:434px;top:78.5px;" width="14" height="12" viewBox="0 0 14 12"><path d="M2 11 L9 3" stroke="#AFAC9C" stroke-width="1.6"/><path d="M6 1 L10 0.5 L12 3 L10 4.5 Z" fill="#AFAC9C"/><path d="M2.5 2.5 L10.5 10.5" stroke="#AFAC9C" stroke-width="1.6"/><path d="M0.5 3 Q0.5 0.5 3 0.5 L4 2 L2.5 3.5 Z" fill="#AFAC9C"/></svg>
<svg style="position:absolute;left:451px;top:77.5px;" width="14" height="14" viewBox="0 0 14 14"><path d="M0.5 12 V4 L9 12 Z" fill="none" stroke="#AFAC9C" stroke-width="1.2"/><path d="M2 10.5 V7.5 L5 10.5 Z" fill="#C4C1B1"/><path d="M4.5 8.5 L11 1.5 L12.5 3 L6 10 Z" fill="#AFAC9C"/><path d="M0 12.5 H12" stroke="#AFAC9C"/></svg>
<div style="position:absolute;left:468.4px;top:77px;width:1px;height:15px;background:#D0CDBD"></div>
<svg style="position:absolute;left:473px;top:80.5px;" width="14" height="8" viewBox="0 0 14 8"><circle cx="3.5" cy="3.5" r="2.8" fill="none" stroke="#AFAC9C" stroke-width="1.4"/><circle cx="8.5" cy="3.5" r="2.8" fill="none" stroke="#AFAC9C" stroke-width="1.4"/></svg>
<svg style="position:absolute;left:490px;top:87.3px;" width="5" height="3" viewBox="0 0 5 3"><path d="M0.5 0 H4.5 L2.5 2.5 Z" fill="#111"/></svg>
<div style="position:absolute;left:0px;top:94px;width:800px;height:13px;background:#ECE9D8"></div>
<div style="position:absolute;left:124px;top:94px;width:676px;height:13px;background:#fff"></div>
<div class="t" style="left:24.00px;top:96.00px;font-size:8.5px;color:#333;transform:scaleX(0.8749);">MOIS</div>
<svg style="position:absolute;left:72.5px;top:99px;" width="5" height="3" viewBox="0 0 5 3"><path d="M0 0 H5 L2.5 3 Z" fill="#111"/></svg>
<svg style="position:absolute;left:86px;top:96px;" width="9.5" height="8.5" viewBox="0 0 9.5 8.5"><path d="M1 1 L8.5 7.5 M8.5 1 L1 7.5" stroke="#B22222" stroke-width="1.7"/></svg>
<svg style="position:absolute;left:100px;top:96px;" width="9" height="8.5" viewBox="0 0 9 8.5"><path d="M0.8 4.5 L3.3 7.5 L8.3 0.8" stroke="#2E9E2E" stroke-width="1.8" fill="none"/></svg>
<div style="position:absolute;left:110px;top:94px;width:14px;height:13px;background:#A9C0EA;border:1px solid #7690CC;box-sizing:border-box"></div>
<div class="t" style="left:113.00px;top:97.00px;font-size:8.5px;color:#3A4A70;transform:scaleX(1.2255);font-family:'Liberation Serif',serif;font-style:italic;">fx</div>
<div class="t" style="left:128.30px;top:96.00px;font-size:10px;color:#666;transform:scaleX(0.8034);">=</div>
<div class="t" style="left:134.90px;top:96.00px;font-size:10px;color:#000;font-weight:bold;transform:scaleX(0.9416);">MOIS(A47)</div>
<div style="position:absolute;left:0px;top:107px;width:800px;height:14px;background:#EEEBDE;border-top:1px solid #93928A"></div>
<div style="position:absolute;left:262px;top:108px;width:121px;height:12px;background:#BDD0EE"></div>
<div style="position:absolute;left:18px;top:108px;width:1px;height:12px;background:#A3A298"></div>
<div style="position:absolute;left:139px;top:108px;width:1px;height:12px;background:#A3A298"></div>
<div style="position:absolute;left:261px;top:108px;width:1px;height:12px;background:#A3A298"></div>
<div style="position:absolute;left:383px;top:108px;width:1px;height:12px;background:#A3A298"></div>
<div style="position:absolute;left:482px;top:108px;width:1px;height:12px;background:#A3A298"></div>
<div style="position:absolute;left:721px;top:108px;width:1px;height:12px;background:#A3A298"></div>
<div style="position:absolute;left:0px;top:120px;width:800px;height:1px;background:#A3A298"></div>
<div class="t" style="left:76.00px;top:111.00px;font-size:9px;color:#555;">A</div>
<div class="t" style="left:197.00px;top:111.00px;font-size:9px;color:#555;">B</div>
<div class="t" style="left:318.75px;top:111.00px;font-size:9px;color:#555;">C</div>
<div class="t" style="left:428.75px;top:111.00px;font-size:9px;color:#555;">D</div>
<div class="t" style="left:598.00px;top:111.00px;font-size:9px;color:#555;">E</div>
<div class="t" style="left:772.25px;top:111.00px;font-size:9px;color:#555;">F</div>
<div style="position:absolute;left:19px;top:121px;width:781px;height:529px;background:#fff"></div>
<div style="position:absolute;left:0px;top:121px;width:18px;height:529px;background:#ECE9D8"></div>
<div style="position:absolute;left:18px;top:121px;width:1px;height:529px;background:#BDBAAA"></div>
<div style="position:absolute;left:19px;top:212px;width:364px;height:26px;background:#C0C0C0"></div>
<div style="position:absolute;left:19px;top:238px;width:364px;height:1.3px;background:#1A1A1A"></div>
<div style="position:absolute;left:382px;top:212px;width:1.2px;height:15px;background:#333"></div>
<div class="t" style="left:68.60px;top:227.00px;font-size:10px;color:#1A1A1A;font-weight:bold;transform:scaleX(0.9589);">Date</div>
<div class="t" style="left:178.39px;top:227.00px;font-size:10px;color:#1A1A1A;font-weight:bold;transform:scaleX(0.9595);">Trimestre</div>
<div class="t" style="left:311.07px;top:227.00px;font-size:10px;color:#1A1A1A;font-weight:bold;transform:scaleX(0.9591);">Mois</div>
<div style="position:absolute;left:128px;top:227px;width:12px;height:12px;background:#EEEBDC;border-right:1px solid #6E6C62;border-bottom:1px solid #A9A799;box-sizing:border-box"></div>
<svg style="position:absolute;left:131px;top:230.5px;" width="6" height="4" viewBox="0 0 6 4"><path d="M0 0 H6 L3 3.5 Z" fill="#000"/></svg>
<div style="position:absolute;left:250px;top:227px;width:12px;height:12px;background:#EEEBDC;border-right:1px solid #6E6C62;border-bottom:1px solid #A9A799;box-sizing:border-box"></div>
<svg style="position:absolute;left:253px;top:230.5px;" width="6" height="4" viewBox="0 0 6 4"><path d="M0 0 H6 L3 3.5 Z" fill="#000"/></svg>
<div style="position:absolute;left:371px;top:227px;width:12px;height:12px;background:#EEEBDC;border-right:1px solid #6E6C62;border-bottom:1px solid #A9A799;box-sizing:border-box"></div>
<svg style="position:absolute;left:374px;top:230.5px;" width="6" height="4" viewBox="0 0 6 4"><path d="M0 0 H6 L3 3.5 Z" fill="#000"/></svg>
<div style="position:absolute;left:0px;top:148px;width:18px;height:1px;background:#CBC8B8"></div>
<div class="t" style="left:5.89px;top:133.00px;font-size:10.5px;color:#6A6A6A;">3</div>
<div style="position:absolute;left:0px;top:160px;width:18px;height:1px;background:#CBC8B8"></div>
<div class="t" style="left:5.89px;top:149.00px;font-size:10.5px;color:#6A6A6A;">4</div>
<div style="position:absolute;left:0px;top:173px;width:18px;height:1px;background:#CBC8B8"></div>
<div class="t" style="left:5.89px;top:162.00px;font-size:10.5px;color:#6A6A6A;">5</div>
<div style="position:absolute;left:0px;top:199px;width:18px;height:1px;background:#CBC8B8"></div>
<div class="t" style="left:5.89px;top:185.00px;font-size:10.5px;color:#6A6A6A;">6</div>
<div style="position:absolute;left:0px;top:212px;width:18px;height:1px;background:#CBC8B8"></div>
<div class="t" style="left:5.89px;top:200.00px;font-size:10.5px;color:#6A6A6A;">7</div>
<div style="position:absolute;left:0px;top:238px;width:18px;height:1px;background:#CBC8B8"></div>
<div class="t" style="left:5.89px;top:226.00px;font-size:10.5px;color:#6A6A6A;">8</div>
<div style="position:absolute;left:0px;top:251px;width:18px;height:1px;background:#CBC8B8"></div>
<div class="t" style="left:2.97px;top:240.00px;font-size:10.5px;color:#5A5AB0;">36</div>
<div style="position:absolute;left:19px;top:251px;width:364px;height:1px;background:repeating-linear-gradient(90deg,#A8A8A8 0 2px,transparent 2px 3px)"></div>
<div class="t" style="left:60.20px;top:241.00px;font-size:10px;color:#666;transform:scaleX(0.9371);">28/02/09</div>
<div class="t" style="left:308.73px;top:241.00px;font-size:10px;color:#666;transform:scaleX(0.9226);">janvier</div>
<div style="position:absolute;left:0px;top:277px;width:18px;height:1px;background:#CBC8B8"></div>
<div class="t" style="left:2.97px;top:266.00px;font-size:10.5px;color:#5A5AB0;">37</div>
<div style="position:absolute;left:19px;top:277px;width:364px;height:1px;background:repeating-linear-gradient(90deg,#A8A8A8 0 2px,transparent 2px 3px)"></div>
<div class="t" style="left:60.20px;top:267.00px;font-size:10px;color:#666;transform:scaleX(0.9371);">01/03/09</div>
<div class="t" style="left:308.73px;top:267.00px;font-size:10px;color:#666;transform:scaleX(0.9226);">janvier</div>
<div style="position:absolute;left:0px;top:302px;width:18px;height:1px;background:#CBC8B8"></div>
<div class="t" style="left:2.97px;top:291.00px;font-size:10.5px;color:#5A5AB0;">38</div>
<div style="position:absolute;left:19px;top:302px;width:364px;height:1px;background:repeating-linear-gradient(90deg,#A8A8A8 0 2px,transparent 2px 3px)"></div>
<div class="t" style="left:60.20px;top:292.00px;font-size:10px;color:#666;transform:scaleX(0.9371);">04/03/09</div>
<div class="t" style="left:308.73px;top:292.00px;font-size:10px;color:#666;transform:scaleX(0.9226);">janvier</div>
<div style="position:absolute;left:0px;top:327px;width:18px;height:1px;background:#CBC8B8"></div>
<div class="t" style="left:2.97px;top:316.00px;font-size:10.5px;color:#5A5AB0;">39</div>
<div style="position:absolute;left:19px;top:327px;width:364px;height:1px;background:repeating-linear-gradient(90deg,#A8A8A8 0 2px,transparent 2px 3px)"></div>
<div class="t" style="left:60.20px;top:317.00px;font-size:10px;color:#666;transform:scaleX(0.9371);">09/03/09</div>
<div class="t" style="left:308.73px;top:317.00px;font-size:10px;color:#666;transform:scaleX(0.9226);">janvier</div>
<div style="position:absolute;left:0px;top:340px;width:18px;height:1px;background:#CBC8B8"></div>
<div class="t" style="left:2.97px;top:329.00px;font-size:10.5px;color:#5A5AB0;">40</div>
<div style="position:absolute;left:19px;top:340px;width:364px;height:1px;background:repeating-linear-gradient(90deg,#A8A8A8 0 2px,transparent 2px 3px)"></div>
<div class="t" style="left:60.20px;top:330.00px;font-size:10px;color:#666;transform:scaleX(0.9371);">10/03/09</div>
<div class="t" style="left:308.73px;top:330.00px;font-size:10px;color:#666;transform:scaleX(0.9226);">janvier</div>
<div style="position:absolute;left:0px;top:365px;width:18px;height:1px;background:#CBC8B8"></div>
<div class="t" style="left:2.97px;top:354.00px;font-size:10.5px;color:#5A5AB0;">41</div>
<div style="position:absolute;left:19px;top:365px;width:364px;height:1px;background:repeating-linear-gradient(90deg,#A8A8A8 0 2px,transparent 2px 3px)"></div>
<div class="t" style="left:60.20px;top:355.00px;font-size:10px;color:#666;transform:scaleX(0.9371);">10/03/09</div>
<div class="t" style="left:308.73px;top:355.00px;font-size:10px;color:#666;transform:scaleX(0.9226);">janvier</div>
<div style="position:absolute;left:0px;top:391px;width:18px;height:1px;background:#CBC8B8"></div>
<div class="t" style="left:2.97px;top:380.00px;font-size:10.5px;color:#5A5AB0;">42</div>
<div style="position:absolute;left:19px;top:391px;width:364px;height:1px;background:repeating-linear-gradient(90deg,#A8A8A8 0 2px,transparent 2px 3px)"></div>
<div class="t" style="left:60.20px;top:381.00px;font-size:10px;color:#666;transform:scaleX(0.9371);">10/03/09</div>
<div class="t" style="left:308.73px;top:381.00px;font-size:10px;color:#666;transform:scaleX(0.9226);">janvier</div>
<div style="position:absolute;left:0px;top:416px;width:18px;height:1px;background:#CBC8B8"></div>
<div class="t" style="left:2.97px;top:405.00px;font-size:10.5px;color:#5A5AB0;">43</div>
<div style="position:absolute;left:19px;top:416px;width:364px;height:1px;background:repeating-linear-gradient(90deg,#A8A8A8 0 2px,transparent 2px 3px)"></div>
<div class="t" style="left:60.20px;top:406.00px;font-size:10px;color:#666;transform:scaleX(0.9371);">12/03/09</div>
<div class="t" style="left:308.73px;top:406.00px;font-size:10px;color:#666;transform:scaleX(0.9226);">janvier</div>
<div style="position:absolute;left:0px;top:454px;width:18px;height:1px;background:#CBC8B8"></div>
<div class="t" style="left:2.97px;top:443.00px;font-size:10.5px;color:#5A5AB0;">44</div>
<div style="position:absolute;left:19px;top:454px;width:364px;height:1px;background:repeating-linear-gradient(90deg,#A8A8A8 0 2px,transparent 2px 3px)"></div>
<div class="t" style="left:60.20px;top:444.00px;font-size:10px;color:#666;transform:scaleX(0.9371);">16/03/09</div>
<div class="t" style="left:308.73px;top:444.00px;font-size:10px;color:#666;transform:scaleX(0.9226);">janvier</div>
<div style="position:absolute;left:0px;top:467px;width:18px;height:1px;background:#CBC8B8"></div>
<div class="t" style="left:2.97px;top:456.00px;font-size:10.5px;color:#5A5AB0;">45</div>
<div style="position:absolute;left:19px;top:467px;width:364px;height:1px;background:repeating-linear-gradient(90deg,#A8A8A8 0 2px,transparent 2px 3px)"></div>
<div class="t" style="left:60.20px;top:457.00px;font-size:10px;color:#666;transform:scaleX(0.9371);">18/03/09</div>
<div class="t" style="left:308.73px;top:457.00px;font-size:10px;color:#666;transform:scaleX(0.9226);">janvier</div>
<div style="position:absolute;left:0px;top:480px;width:18px;height:1px;background:#CBC8B8"></div>
<div class="t" style="left:2.97px;top:469.00px;font-size:10.5px;color:#5A5AB0;">46</div>
<div style="position:absolute;left:19px;top:480px;width:364px;height:1px;background:repeating-linear-gradient(90deg,#A8A8A8 0 2px,transparent 2px 3px)"></div>
<div class="t" style="left:60.20px;top:470.00px;font-size:10px;color:#666;transform:scaleX(0.9371);">24/03/09</div>
<div class="t" style="left:308.73px;top:470.00px;font-size:10px;color:#666;transform:scaleX(0.9226);">janvier</div>
<div style="position:absolute;left:0px;top:481px;width:18px;height:11px;background:#B8CBEA"></div>
<div style="position:absolute;left:0px;top:492px;width:18px;height:1px;background:#CBC8B8"></div>
<div class="t" style="left:2.97px;top:481.00px;font-size:10.5px;color:#5A5AB0;">47</div>
<div style="position:absolute;left:19px;top:492px;width:364px;height:1px;background:repeating-linear-gradient(90deg,#A8A8A8 0 2px,transparent 2px 3px)"></div>
<div class="t" style="left:60.20px;top:482.00px;font-size:10px;color:#666;transform:scaleX(0.9371);">25/03/09</div>
<div style="position:absolute;left:0px;top:505px;width:18px;height:1px;background:#CBC8B8"></div>
<div class="t" style="left:2.97px;top:494.00px;font-size:10.5px;color:#5A5AB0;">48</div>
<div style="position:absolute;left:19px;top:505px;width:364px;height:1px;background:repeating-linear-gradient(90deg,#A8A8A8 0 2px,transparent 2px 3px)"></div>
<div class="t" style="left:60.20px;top:495.00px;font-size:10px;color:#666;transform:scaleX(0.9371);">26/03/09</div>
<div class="t" style="left:308.73px;top:495.00px;font-size:10px;color:#666;transform:scaleX(0.9226);">janvier</div>
<div style="position:absolute;left:0px;top:518px;width:18px;height:1px;background:#CBC8B8"></div>
<div class="t" style="left:2.97px;top:507.00px;font-size:10.5px;color:#5A5AB0;">49</div>
<div style="position:absolute;left:19px;top:518px;width:364px;height:1px;background:repeating-linear-gradient(90deg,#A8A8A8 0 2px,transparent 2px 3px)"></div>
<div class="t" style="left:60.20px;top:508.00px;font-size:10px;color:#666;transform:scaleX(0.9371);">31/03/09</div>
<div class="t" style="left:308.73px;top:508.00px;font-size:10px;color:#666;transform:scaleX(0.9226);">janvier</div>
<div style="position:absolute;left:0px;top:531px;width:18px;height:1px;background:#CBC8B8"></div>
<div class="t" style="left:2.97px;top:519.00px;font-size:10.5px;color:#5A5AB0;">50</div>
<div style="position:absolute;left:19px;top:531px;width:364px;height:1px;background:repeating-linear-gradient(90deg,#A8A8A8 0 2px,transparent 2px 3px)"></div>
<div class="t" style="left:60.20px;top:520.00px;font-size:10px;color:#666;transform:scaleX(0.9371);">31/03/09</div>
<div class="t" style="left:308.73px;top:520.00px;font-size:10px;color:#666;transform:scaleX(0.9226);">janvier</div>
<div style="position:absolute;left:0px;top:543px;width:18px;height:1px;background:#CBC8B8"></div>
<div class="t" style="left:2.97px;top:532.00px;font-size:10.5px;color:#5A5AB0;">51</div>
<div style="position:absolute;left:19px;top:543px;width:364px;height:1px;background:repeating-linear-gradient(90deg,#A8A8A8 0 2px,transparent 2px 3px)"></div>
<div class="t" style="left:60.20px;top:533.00px;font-size:10px;color:#666;transform:scaleX(0.9371);">31/03/09</div>
<div class="t" style="left:308.73px;top:533.00px;font-size:10px;color:#666;transform:scaleX(0.9226);">janvier</div>
<div style="position:absolute;left:0px;top:556px;width:18px;height:1px;background:#CBC8B8"></div>
<div class="t" style="left:2.97px;top:544.00px;font-size:10.5px;color:#5A5AB0;">52</div>
<div style="position:absolute;left:19px;top:556px;width:364px;height:1px;background:repeating-linear-gradient(90deg,#A8A8A8 0 2px,transparent 2px 3px)"></div>
<div class="t" style="left:60.20px;top:546.00px;font-size:10px;color:#666;transform:scaleX(0.9371);">31/03/09</div>
<div class="t" style="left:308.73px;top:546.00px;font-size:10px;color:#666;transform:scaleX(0.9226);">janvier</div>
<div style="position:absolute;left:0px;top:569px;width:18px;height:1px;background:#CBC8B8"></div>
<div class="t" style="left:2.97px;top:557.00px;font-size:10.5px;color:#5A5AB0;">53</div>
<div style="position:absolute;left:19px;top:569px;width:364px;height:1px;background:repeating-linear-gradient(90deg,#A8A8A8 0 2px,transparent 2px 3px)"></div>
<div class="t" style="left:60.20px;top:558.00px;font-size:10px;color:#666;transform:scaleX(0.9371);">04/04/09</div>
<div class="t" style="left:308.73px;top:558.00px;font-size:10px;color:#666;transform:scaleX(0.9226);">janvier</div>
<div style="position:absolute;left:0px;top:581px;width:18px;height:1px;background:#CBC8B8"></div>
<div class="t" style="left:2.97px;top:570.00px;font-size:10.5px;color:#5A5AB0;">54</div>
<div style="position:absolute;left:19px;top:581px;width:364px;height:1px;background:repeating-linear-gradient(90deg,#A8A8A8 0 2px,transparent 2px 3px)"></div>
<div class="t" style="left:60.20px;top:571.00px;font-size:10px;color:#666;transform:scaleX(0.9371);">08/04/09</div>
<div class="t" style="left:308.73px;top:571.00px;font-size:10px;color:#666;transform:scaleX(0.9226);">janvier</div>
<div style="position:absolute;left:0px;top:594px;width:18px;height:1px;background:#CBC8B8"></div>
<div class="t" style="left:2.97px;top:583.00px;font-size:10.5px;color:#5A5AB0;">55</div>
<div style="position:absolute;left:19px;top:594px;width:364px;height:1px;background:repeating-linear-gradient(90deg,#A8A8A8 0 2px,transparent 2px 3px)"></div>
<div class="t" style="left:60.20px;top:584.00px;font-size:10px;color:#666;transform:scaleX(0.9371);">08/04/09</div>
<div class="t" style="left:308.73px;top:584.00px;font-size:10px;color:#666;transform:scaleX(0.9226);">janvier</div>
<div style="position:absolute;left:0px;top:607px;width:18px;height:1px;background:#CBC8B8"></div>
<div class="t" style="left:2.97px;top:595.00px;font-size:10.5px;color:#5A5AB0;">56</div>
<div style="position:absolute;left:19px;top:607px;width:364px;height:1px;background:repeating-linear-gradient(90deg,#A8A8A8 0 2px,transparent 2px 3px)"></div>
<div class="t" style="left:60.20px;top:597.00px;font-size:10px;color:#666;transform:scaleX(0.9371);">09/04/09</div>
<div class="t" style="left:308.73px;top:597.00px;font-size:10px;color:#666;transform:scaleX(0.9226);">janvier</div>
<div style="position:absolute;left:0px;top:619px;width:18px;height:1px;background:#CBC8B8"></div>
<div class="t" style="left:2.97px;top:608.00px;font-size:10.5px;color:#5A5AB0;">57</div>
<div style="position:absolute;left:19px;top:619px;width:364px;height:1px;background:repeating-linear-gradient(90deg,#A8A8A8 0 2px,transparent 2px 3px)"></div>
<div class="t" style="left:60.20px;top:609.00px;font-size:10px;color:#666;transform:scaleX(0.9371);">15/04/09</div>
<div class="t" style="left:308.73px;top:609.00px;font-size:10px;color:#666;transform:scaleX(0.9226);">janvier</div>
<div style="position:absolute;left:0px;top:632px;width:18px;height:1px;background:#CBC8B8"></div>
<div class="t" style="left:2.97px;top:621.00px;font-size:10.5px;color:#5A5AB0;">58</div>
<div style="position:absolute;left:19px;top:632px;width:364px;height:1px;background:repeating-linear-gradient(90deg,#A8A8A8 0 2px,transparent 2px 3px)"></div>
<div class="t" style="left:60.20px;top:622.00px;font-size:10px;color:#666;transform:scaleX(0.9371);">15/04/09</div>
<div class="t" style="left:308.73px;top:622.00px;font-size:10px;color:#666;transform:scaleX(0.9226);">janvier</div>
<div style="position:absolute;left:0px;top:645px;width:18px;height:1px;background:#CBC8B8"></div>
<div class="t" style="left:2.97px;top:634.00px;font-size:10.5px;color:#5A5AB0;">59</div>
<div style="position:absolute;left:19px;top:645px;width:364px;height:1px;background:repeating-linear-gradient(90deg,#A8A8A8 0 2px,transparent 2px 3px)"></div>
<div class="t" style="left:60.20px;top:635.00px;font-size:10px;color:#666;transform:scaleX(0.9371);">15/04/09</div>
<div class="t" style="left:308.73px;top:635.00px;font-size:10px;color:#666;transform:scaleX(0.9226);">janvier</div>
<div style="position:absolute;left:0px;top:658px;width:18px;height:1px;background:#CBC8B8"></div>
<div class="t" style="left:2.97px;top:646.00px;font-size:10.5px;color:#5A5AB0;">60</div>
<div style="position:absolute;left:19px;top:658px;width:364px;height:1px;background:repeating-linear-gradient(90deg,#A8A8A8 0 2px,transparent 2px 3px)"></div>
<div class="t" style="left:60.20px;top:647.00px;font-size:10px;color:#666;transform:scaleX(0.9371);">16/04/09</div>
<div class="t" style="left:308.73px;top:647.00px;font-size:10px;color:#666;transform:scaleX(0.9226);">janvier</div>
<div style="position:absolute;left:139px;top:239px;width:1px;height:411px;background:repeating-linear-gradient(180deg,#A8A8A8 0 2px,transparent 2px 3px)"></div>
<div style="position:absolute;left:261px;top:239px;width:1px;height:411px;background:repeating-linear-gradient(180deg,#A8A8A8 0 2px,transparent 2px 3px)"></div>
<div style="position:absolute;left:383px;top:251px;width:1px;height:399px;background:repeating-linear-gradient(180deg,#A8A8A8 0 2px,transparent 2px 3px)"></div>
<div style="position:absolute;left:124px;top:121px;width:676px;height:1px;background:repeating-linear-gradient(90deg,#ABABAB 0 2px,transparent 2px 3px)"></div>
<div style="position:absolute;left:261px;top:479.5px;width:123px;height:14px;border:1.5px solid #333;box-sizing:border-box;background:#fff"></div>
<div class="t" style="left:263.00px;top:483.00px;font-size:10px;color:#555;transform:scaleX(0.9740);">=MOIS(A47)</div>
<div style="position:absolute;left:383px;top:492px;width:2.5px;height:2.5px;background:#222"></div>
<div style="position:absolute;left:383px;top:581px;width:417px;height:1px;background:repeating-linear-gradient(90deg,#8A8A8A 0 2px,transparent 2px 3px)"></div>
<div style="position:absolute;left:50px;top:474px;width:61px;height:26px;border:1.2px solid #C8504F;border-radius:50%;box-sizing:border-box"></div>
<div style="position:absolute;left:255.3px;top:468.7px;width:110.19999999999999px;height:37.10000000000002px;border:1.2px solid #C8504F;border-radius:50%;box-sizing:border-box"></div>
<div style="position:absolute;left:408px;top:365px;width:400px;height:215px;background:#ECE9D8"></div>
<div style="position:absolute;left:408px;top:365px;width:400px;height:20px;background:linear-gradient(#4A90F4 0px,#0E5EE8 2px,#0054E2 7px,#0860F0 14px,#0C66F5 17px,#0048CE 19px,#003CB8 20px);border-radius:6px 6px 0 0"></div>
<div style="position:absolute;left:410px;top:385px;width:398px;height:1.5px;background:#C8D6F2"></div>
<div style="position:absolute;left:408px;top:386px;width:2px;height:194px;background:#1D44B8"></div>
<div style="position:absolute;left:408px;top:577px;width:400px;height:3px;background:#1D44B8"></div>
<div class="t" style="left:412.00px;top:372.00px;font-size:10.5px;color:#fff;font-weight:bold;transform:scaleX(0.9164);">Arguments de la fonction</div>
<div style="position:absolute;left:768px;top:368px;width:16px;height:16px;background:linear-gradient(#4A7EEA,#2D5ED6);border:1px solid #B4CEF6;border-radius:2.5px;box-sizing:border-box"></div>
<div class="t" style="left:772.30px;top:372.00px;font-size:10.5px;color:#F4F8FF;font-weight:bold;transform:scaleX(1.0929);">?</div>
<div style="position:absolute;left:785.5px;top:368px;width:17px;height:16px;background:linear-gradient(#E07050,#D04A22);border:1px solid #EFC4B6;border-radius:2.5px;box-sizing:border-box"></div>
<svg style="position:absolute;left:788.5px;top:371px;" width="10" height="10" viewBox="0 0 10 10"><path d="M1.5 1.5 L8.5 8.5 M8.5 1.5 L1.5 8.5" stroke="#FFF4EE" stroke-width="1.5"/></svg>
<div style="position:absolute;left:411px;top:391px;width:384px;height:28px;border:1px solid #C2BEAA;border-radius:2px;box-sizing:border-box"></div>
<div style="position:absolute;left:414px;top:387px;width:22px;height:8px;background:#ECE9D8"></div>
<div class="t" style="left:415.00px;top:388.00px;font-size:8.5px;color:#444;transform:scaleX(0.8749);">MOIS</div>
<div class="t" style="left:448.25px;top:401.00px;font-size:8.8px;color:#222;font-weight:bold;">Numéro_de_série</div>
<div style="position:absolute;left:528px;top:399px;width:164px;height:13px;background:#fff;border-top:1px solid #5A5850;border-left:1px solid #5A5850;border-right:1px solid #D8D5C8;border-bottom:1px solid #fff;box-sizing:border-box"></div>
<div style="position:absolute;left:530px;top:401.5px;width:146.5px;height:9.5px;background:#000"></div>
<div class="t" style="left:531.00px;top:402.00px;font-size:9px;color:#fff;font-weight:bold;transform:scaleX(0.7872);">A47</div>
<div style="position:absolute;left:678px;top:400px;width:13px;height:12px;background:#FAFAF8;border-right:1px solid #777;border-bottom:1px solid #777;box-sizing:border-box"></div>
<svg style="position:absolute;left:679px;top:401px;" width="11" height="10" viewBox="0 0 11 10"><rect x="1" y="1" width="5" height="1.5" fill="#1A1A6A"/><path d="M1 4.5 H5 M1 7 H5" stroke="#C8C8D8" stroke-width="0.8"/><path d="M5 3 L8.5 7" stroke="#D03040" stroke-width="2"/><rect x="6" y="8.3" width="3.5" height="1.4" fill="#111"/></svg>
<div class="t" style="left:695.00px;top:401.00px;font-size:8.8px;color:#555;transform:scaleX(1.1655);">=</div>
<div class="t" style="left:706.40px;top:402.00px;font-size:8.8px;color:#555;transform:scaleX(0.8829);">39897</div>
<div class="t" style="left:695.00px;top:425.00px;font-size:8.8px;color:#555;transform:scaleX(1.1655);">=</div>
<div class="t" style="left:706.40px;top:427.00px;font-size:8.8px;color:#555;transform:scaleX(0.9009);">3</div>
<div style="position:absolute;left:687px;top:419px;width:37px;height:21px;border:1.2px solid #C8504F;border-radius:50%;box-sizing:border-box"></div>
<div class="t" style="left:413.00px;top:438.00px;font-size:8.6px;color:#444;transform:scaleX(0.9295);">Donne le mois, un nombre de 1 (Janvier) à 12 (Décembre). Consulter l&#x27;aide pour plus d&#x27;informations sur</div>
<div class="t" style="left:413.00px;top:448.00px;font-size:8.6px;color:#444;transform:scaleX(0.9001);">les numéros de série.</div>
<div class="t" style="left:445.75px;top:476.00px;font-size:8.8px;color:#222;font-weight:bold;">Numéro_de_série</div>
<div class="t" style="left:530.50px;top:476.00px;font-size:8.6px;color:#444;transform:scaleX(0.9408);">est un nombre dans le code d&#x27;heure et de date utilisé par Microsoft</div>
<div class="t" style="left:530.50px;top:486.00px;font-size:8.6px;color:#444;transform:scaleX(0.9388);">Excel.</div>
<div style="position:absolute;left:415px;top:509.5px;width:381px;height:1px;background:#B5B2A2"></div>
<div style="position:absolute;left:415px;top:510.5px;width:381px;height:1px;background:#fff"></div>
<div class="t" style="left:413.00px;top:547.00px;font-size:8.6px;color:#555;transform:scaleX(0.9754);">Résultat =</div>
<div class="t" style="left:528.20px;top:543.00px;font-size:8.6px;color:#333;transform:scaleX(0.9396);">janvier</div>
<div style="position:absolute;left:516px;top:539px;width:54px;height:21px;border:1.2px solid #C8504F;border-radius:50%;box-sizing:border-box"></div>
<div class="t" style="left:415.00px;top:560.00px;font-size:8.6px;color:#1A3FC8;transform:scaleX(0.9401);text-decoration:underline;">Aide sur cette fonction</div>
<div style="position:absolute;left:678px;top:557px;width:53px;height:16px;background:#F3F2EC;border:1px solid #333;border-radius:2px;box-sizing:border-box;box-shadow:inset -1px -1px #bbb"></div>
<div class="t" style="left:699.00px;top:561.00px;font-size:8.6px;color:#333;transform:scaleX(0.8047);">OK</div>
<div style="position:absolute;left:739px;top:557px;width:53px;height:16px;background:#F3F2EC;border:1px solid #777;border-radius:2px;box-sizing:border-box;box-shadow:inset -1px -1px #ccc"></div>
<div class="t" style="left:751.00px;top:561.00px;font-size:8.6px;color:#333;transform:scaleX(0.9451);">Annuler</div>
</body></html>
